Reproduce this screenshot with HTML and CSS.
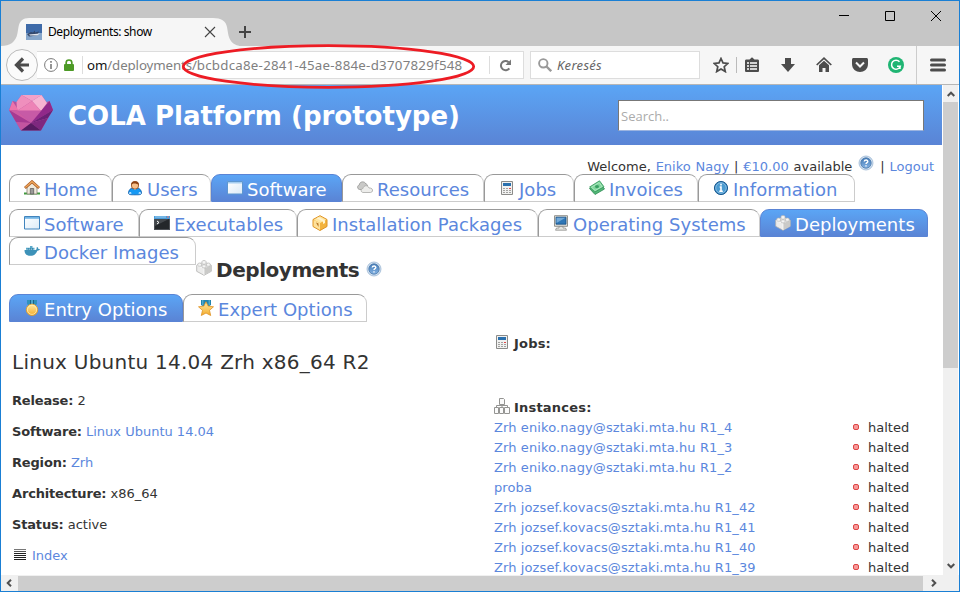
FILE: index.html
```html
<!DOCTYPE html>
<html lang="en">
<head>
<meta charset="utf-8">
<title>Deployments: show</title>
<link rel="stylesheet" href="styles.css">
</head>
<body>
<svg class="defs" width="0" height="0">
  <defs>
    <linearGradient id="gold" x1="0" y1="0" x2="0" y2="1"><stop offset="0" stop-color="#ffe9a0"/><stop offset="1" stop-color="#f3ac2c"/></linearGradient>
    <linearGradient id="pane" x1="0" y1="0" x2="1" y2="1"><stop offset="0" stop-color="#fff"/><stop offset="1" stop-color="#dcebf7"/></linearGradient>
    <linearGradient id="ball" x1="0" y1="0" x2="0" y2="1"><stop offset="0" stop-color="#3f78b5"/><stop offset="1" stop-color="#86b4e4"/></linearGradient>
  </defs>
  <symbol id="i-home" viewBox="0 0 16 16"><path d="M0 12.5h16v2H0z" fill="#3f9a3c"/><path d="M3 7l5-5 5 5v7H3z" fill="#efe9dc" stroke="#8b8275" stroke-width=".8"/><path d="M6.300 8.500h3.400V14H6.300z" fill="#9a9a98" stroke="#555" stroke-width=".7"/><path d="M.9 8L8 1.700 15.100 8" fill="none" stroke="#a85a22" stroke-width="2.800"/><path d="M1.300 7.500L8 1.700l6.700 5.800" fill="none" stroke="#efa75c" stroke-width="1.300"/></symbol>
  <symbol id="i-user" viewBox="0 0 16 16"><path d="M1.500 13c0-3 2-4.600 4-5h5c2 .4 4 2 4 5 0 2-3 1.800-6.500 1.800S1.500 15 1.500 13z" fill="#1699f4" stroke="#0b5aa8" stroke-width=".8"/><path d="M6 8h4l-2 2z" fill="#fff"/><path d="M2 12.500l2-.5.500 1.800H2z" fill="#cfe9ff"/><path d="M14 12.500l-2-.5-.5 1.800H14z" fill="#cfe9ff"/><rect x="4.500" y="1.500" width="7" height="7.500" rx="3" fill="#f7c08a" stroke="#8a4516" stroke-width=".8"/><path d="M4 5.500C3.500-.3 12.500-.3 12 5.500 11 4 9 3.600 7 3.600 6 3.600 5 4 4 5.500z" fill="#8d4213"/></symbol>
  <symbol id="i-window" viewBox="0 0 16 16"><path d="M.5 1.500h15v12.500H.5z" fill="url(#pane)" stroke="#4184bd"/><path d="M1 2h14v1.800H1z" fill="#72b5e5"/></symbol>
  <symbol id="i-window-light" viewBox="0 0 16 16"><path d="M.5 1.500h15v12.500H.5z" fill="url(#pane)" stroke="#5e97cf"/><path d="M1 2h14v1.500H1z" fill="#a4cdf0"/></symbol>
  <symbol id="i-term" viewBox="0 0 16 16"><path d="M0 1h16v14H0z" fill="#4c4f54"/><path d="M0 1h16v3H0z" fill="#4a9bd8"/><path d="M1 2h11" stroke="#9fd0f2"/><path d="M13 2h2" stroke="#e77"/><path d="M1 4h14v10H1z" fill="#24272a"/><path d="M1 4h14L1 11z" fill="#43474b"/><path d="M3 6l2 1.500L3 9" fill="none" stroke="#fff"/></symbol>
  <symbol id="i-cloud" viewBox="0 0 16 16"><path d="M2.500 9.500C0 9 0 5.500 2.300 5 2.500 1 8 1 8.800 4c2 0 2.500 3 .7 5.500z" fill="#c9c9c7" stroke="#969694" stroke-width=".8"/><path d="M6 12.500c-2.500-.2-2.500-3.800 0-4C6.500 5 11 4.800 12 8c4.500-.4 4.500 4.300 1.500 4.500z" fill="#ededeb" stroke="#a8a8a6" stroke-width=".8"/></symbol>
  <symbol id="i-calc" viewBox="0 0 16 16"><path d="M2.500 1.500h11v13h-11z" fill="#f1f1f0" stroke="#8b8b89"/><path d="M4 3h8v3H4z" fill="#2a70ae"/><path d="M4 8.500h6M4 10.500h8M4 12.500h8" stroke="#a2a2a0" stroke-dasharray="2 1"/><path d="M10 8.500h2" stroke="#e04848"/></symbol>
  <symbol id="i-money" viewBox="0 0 16 16"><path d="M.5 8.500L11 3l4.500 6L6 14.500z" fill="#55b879" stroke="#2b8a50" stroke-width=".8"/><path d="M.6 7L10.500.8l4.500 6L5.800 12z" fill="#7fd49b" stroke="#2f9455" stroke-width=".8"/><path d="M2.500 7.300l7.600-4.700L13 6.500 6.200 10.400z" fill="none" stroke="#b5ebc6" stroke-width=".8"/><ellipse cx="8" cy="6.600" rx="2" ry="1.700" fill="#3aa062"/></symbol>
  <symbol id="i-info" viewBox="0 0 16 16"><circle cx="8" cy="8" r="6.600" fill="#2c7bb6" stroke="#1b5c92"/><circle cx="8" cy="8" r="5.300" fill="#4b9bd0" stroke="#a9d3ef" stroke-width=".7"/><path d="M8 3.700v1.800M6.700 7H8v4M6.300 11.300h3.500" stroke="#fff" stroke-width="1.600" fill="none"/></symbol>
  <symbol id="i-box" viewBox="0 0 16 16"><path d="M8 .7l7 3.800v7L8 15.500l-7-4v-7z" fill="#f3b33e" stroke="#dd9326"/><path d="M8 1.300l6.300 3.400L8 8 1.700 4.700z" fill="#ffe7a4"/><path d="M8 8v7l-6.400-3.700V4.900z" fill="#ffe19a"/><path d="M4.500 3.200L11 6.500V9l2-1V5.500L6.500 2.200z" fill="#fff4cf"/><path d="M4 7.500l2.500 1V12z" fill="#b57321"/></symbol>
  <symbol id="i-screen" viewBox="0 0 16 16"><path d="M1.500.7h13v10.600h-13z" fill="#deded9" stroke="#92928d"/><path d="M3 2.200h10v7H3z" fill="#2f77b6" stroke="#184e83" stroke-width=".8"/><path d="M3.500 2.700h9L3.500 8z" fill="#72a9d8"/><path d="M6 11.500h4v1.500h2.500l1 2.200h-11l1-2.200H6z" fill="#e5e5e1" stroke="#8f8f8b" stroke-width=".8"/></symbol>
  <symbol id="i-brick" viewBox="0 0 16 16"><path d="M8 2l7.300 3.300v6L8 15.300.7 11.300v-6z" fill="#ececeb" stroke="#b0b0ae" stroke-width=".8"/><path d="M8 8.600l7-3v5.600L8 15z" fill="#cacac8"/><path d="M.9 5.500L8 8.600V15" fill="none" stroke="#fff" stroke-width=".7"/><g fill="#f5f5f4" stroke="#b3b3b1" stroke-width=".7"><path d="M6 1.500c0-1.300 4-1.300 4 0v2c0 1-4 1-4 0z"/><path d="M1.800 4c0-1.300 3.800-1.300 3.800 0v1.500c0 1-3.800 1-3.800 0zM10.400 4c0-1.300 3.800-1.300 3.800 0v1.500c0 1-3.800 1-3.800 0z"/><path d="M6 5.700c0-1.300 4-1.300 4 0v1.500c0 1-4 1-4 0z"/></g></symbol>
  <symbol id="i-whale" viewBox="0 0 16 16"><path d="M.5 7h10.800c1.200 0 1.600-.9 1.200-2.200l.7-.8c.8.500 1.200 1.200 1.200 1.900l1.600.2c-.4 1.200-1.200 1.600-2.600 1.700C12 11.500 9.600 12.800 6.200 12.800 2.500 12.800.5 10.900.5 7z" fill="#3d92b8"/><path d="M2 4.800h8.500v2H2zM6 3h2.500v1.800H6z" fill="#5aa9ca"/><path d="M4.300 5v2M6.400 5V7M8.500 5v2" stroke="#286e91" stroke-width=".6"/></symbol>
  <symbol id="i-medal" viewBox="0 0 16 16"><path d="M3 0h10v4l-3 2.500H6L3 4z" fill="#2f91bd"/><path d="M6 0h4v6H6z" fill="#1b6387"/><path d="M7.200 0h1.600v5H7.200z" fill="#54b5dc"/><circle cx="8" cy="9.800" r="5.700" fill="url(#gold)" stroke="#e39b22" stroke-width=".8"/><circle cx="8" cy="9.800" r="4.600" fill="none" stroke="#fff3bd" stroke-width=".7"/></symbol>
  <symbol id="i-star" viewBox="0 0 16 16"><path d="M3 0h10v5L8 8 3 5z" fill="#2384ac"/><path d="M4.800 0v5M11.200 0v5" stroke="#63bbdc"/><path d="M8 1.800l2.200 4.300 5.300.7-4 3.500 1.200 5.200L8 13l-4.700 2.500 1.200-5.200-4-3.500 5.300-.7z" fill="url(#gold)" stroke="#df9325" stroke-width=".8"/></symbol>
  <symbol id="i-help" viewBox="0 0 16 16"><circle cx="8" cy="8" r="7" fill="#d2e1f1" stroke="#9bb6d3" stroke-width=".8"/><circle cx="8" cy="8" r="5.200" fill="url(#ball)" stroke="#4b78aa" stroke-width=".8"/><path d="M6.200 6.500c.2-2 3.800-1.900 3.600.1C9.700 7.700 8 7.700 8 9M8 10.300v1.300" fill="none" stroke="#fff" stroke-width="1.400"/></symbol>
  <symbol id="i-tree" viewBox="0 0 16 16"><g fill="#fafafa" stroke="#949492"><path d="M5.500.5h4l1 1v5h-5z"/><path d="M2.500 10V7.500h11V10M8 6.500V10" fill="none"/><path d="M.5 9.500h4v6h-4zM5.500 9.500h4v6h-4zM10.500 9.500h5v6h-5z"/></g></symbol>
  <symbol id="i-list" viewBox="0 0 16 16"><path d="M2 2.500h12" stroke="#777"/><path d="M2 4.500h12" stroke="#555"/><path d="M2 6.500h12M2 8.500h12M2 10.500h12M2 12.500h12" stroke="#222"/></symbol>
</svg>

<div class="window">
  <div class="titlebar">
    <div class="browser-tab">
      <svg class="tab-shape" width="242" height="28" viewBox="0 0 242 28"><path d="M0 28c9 0 15-4 16.500-13l1-6C18.500 3 22 0 28 0h184c8 0 13 3 14 9l1 6c1.500 9 6 13 15 13z" fill="#f6f6f6"/></svg>
      <svg class="favicon" width="16" height="16" viewBox="0 0 16 16"><path d="M0 0h16v16H0z" fill="#3e6aa8"/><path d="M0 9h16v7H0z" fill="#86a6cb"/><path d="M1 10l4-2 2 .5 2-2v2l4-1-2 4-8 1z" fill="#34486c"/><path d="M3 10.500l11-1-3 2H4z" fill="#e4e7ee"/></svg>
      <span class="tab-title">Deployments: show</span>
      <svg class="tab-close" width="12" height="12" viewBox="0 0 12 12"><path d="M1 1l10 10M11 1L1 11" stroke="#444" stroke-width="1.100"/></svg>
    </div>
    <svg class="new-tab" width="12" height="12" viewBox="0 0 12 12"><path d="M6 0v12M0 6h12" stroke="#444" stroke-width="2"/></svg>
    <div class="win-buttons">
      <svg width="10" height="10" viewBox="0 0 10 10"><path d="M0 4.500h10" stroke="#000"/></svg>
      <svg width="10" height="10" viewBox="0 0 10 10"><path d="M.5.5h9v9h-9z" fill="none" stroke="#000"/></svg>
      <svg width="10" height="10" viewBox="0 0 10 10"><path d="M0 0l10 10M10 0L0 10" stroke="#000"/></svg>
    </div>
  </div>

  <div class="toolbar">
    <div class="back"><svg width="16" height="16" viewBox="0 0 16 16"><path d="M9 1.500L2.500 8 9 14.500M3 8h12" fill="none" stroke="#4c4c4c" stroke-width="3.200"/></svg></div>
    <div class="urlbar">
      <svg class="url-info" width="14" height="14" viewBox="0 0 14 14"><circle cx="7" cy="7" r="6.400" fill="none" stroke="#7a7a7a"/><path d="M7 3v1.700M7 6v5" stroke="#7a7a7a" stroke-width="1.600"/></svg>
      <svg class="lock" width="10" height="12" viewBox="0 0 10 12"><path d="M2.200 6V3.600c0-3.500 5.600-3.500 5.600 0V6" fill="none" stroke="#4d9a26" stroke-width="1.700"/><rect y="5" width="10" height="7" rx="1" fill="#4d9a26"/></svg>
      <span class="url"><b>om</b>/deployments/<span class="uuid">bcbdca8e-2841-45ae-884e-d3707829f548</span></span>
      <svg class="reload" width="13" height="13" viewBox="0 0 13 13"><path d="M10.300 9.300A4.600 4.600 0 1 1 9.600 3.200" fill="none" stroke="#777" stroke-width="2"/><path d="M12 .5V6H6.500z" fill="#777"/></svg>
    </div>
    <div class="searchbar">
      <svg width="14" height="14" viewBox="0 0 14 14"><circle cx="5.300" cy="5.300" r="4.200" fill="none" stroke="#999" stroke-width="1.900"/><path d="M8.500 8.500l4.700 4.700" stroke="#999" stroke-width="2.400"/></svg>
      <span>Keresés</span>
    </div>
    <div class="tools">
      <svg width="16" height="16" viewBox="0 0 16 16"><path d="M8 1.500l2 4.400 4.900.5-3.700 3.300 1.100 4.900L8 12.100l-4.300 2.500 1.100-4.900L1.100 6.400 6 5.900z" fill="none" stroke="#4c4c4c" stroke-width="1.700"/></svg>
      <i class="sep"></i>
      <svg width="16" height="16" viewBox="0 0 16 16"><path d="M1 4c0-1 .5-1.500 1.500-1.500h3L8 .2l2.500 2.300h3c1 0 1.500.5 1.500 1.500v9.500c0 1-.5 1.500-1.500 1.500h-11C1.500 15 1 14.500 1 13.500z" fill="#4c4c4c"/><path d="M3 6h2M6 6h7M3 9h2M6 9h7M3 12h2M6 12h7" stroke="#fff" stroke-width="1.700"/></svg>
      <svg width="16" height="16" viewBox="0 0 16 16"><path d="M5 1h6v6h4l-7 8-7-8h4z" fill="#4c4c4c"/></svg>
      <svg width="16" height="16" viewBox="0 0 16 16"><path d="M.7 8L8 1.200 15.300 8" fill="none" stroke="#4c4c4c" stroke-width="1.700"/><path d="M3 8.300l5-4.600 5 4.600V15H9.500v-4h-3v4H3z" fill="#4c4c4c"/></svg>
      <svg width="16" height="16" viewBox="0 0 16 16"><path d="M1.500 1h13c.8 0 1.500.6 1.500 1.500V7c0 10.500-16 10.500-16 0V2.500C0 1.600.7 1 1.500 1z" fill="#4c4c4c"/><path d="M4 5.500l4 4 4-4" fill="none" stroke="#f6f6f6" stroke-width="2"/></svg>
      <svg width="16" height="16" viewBox="0 0 16 16"><circle cx="8" cy="8" r="8" fill="#1fb573"/><path d="M11.500 4.800A4.500 4.500 0 1 0 12.300 9.200H9M12 9v3" fill="none" stroke="#fff" stroke-width="1.500"/></svg>
    </div>
    <div class="menu"><svg width="16" height="14" viewBox="0 0 16 14"><path d="M1.500 2h13M1.500 7h13M1.500 12h13" stroke="#4c4c4c" stroke-width="3" stroke-linecap="round"/></svg></div>
  </div>

  <div class="content">
    <div class="page">
      <header class="banner">
        <svg class="logo" width="44" height="36" viewBox="0 0 44 36"><path d="M12.500 0h20l5 7 3-1L44 15 32 35.500H12L0 15l3.500-9 4 1z" fill="#b4529f"/><path d="M12.500 0h20L23 6z" fill="#f3a1c8"/><path d="M12.500 0L23 6 8 16l-.5-9z" fill="#ef8fbd"/><path d="M32.500 0L38 8l-6 8-9-10z" fill="#f6b4d2"/><path d="M23 6l9 10H8z" fill="#ed83b6"/><path d="M3.500 6L10 16H0z" fill="#ed73ab"/><path d="M0 15h8l14 13z" fill="#ce5ba3"/><path d="M8 15.500h26L22 28z" fill="#c75aa6"/><path d="M40.500 6L44 15 22 28z" fill="#91298a"/><path d="M44 15L22 28l17-5z" fill="#6c2075"/><path d="M0 15l22 13-15-1z" fill="#a73a91"/><path d="M7 27l15 1-10 7.500z" fill="#c355a0"/><path d="M22 28l17-5-7 12.500z" fill="#7e287f"/><path d="M12 35.500L22 28l10 7.500z" fill="#571b62"/></svg>
        <h1>COLA Platform (prototype)</h1>
        <div class="site-search">Search..</div>
      </header>

      <div class="account"><span>Welcome, <a>Eniko Nagy</a> | <a>€10.00</a> available</span><svg width="16" height="16"><use href="#i-help"/></svg><span>| <a>Logout</a></span></div>

      <nav class="tabs main">
        <a class="tab w103"><svg><use href="#i-home"/></svg>Home</a>
        <a class="tab w99"><svg><use href="#i-user"/></svg>Users</a>
        <a class="tab on w131"><svg><use href="#i-window-light"/></svg>Software</a>
        <a class="tab w142"><svg><use href="#i-cloud"/></svg>Resources</a>
        <a class="tab w90"><svg><use href="#i-calc"/></svg>Jobs</a>
        <a class="tab w124"><svg><use href="#i-money"/></svg>Invoices</a>
        <a class="tab w157"><svg><use href="#i-info"/></svg>Information</a>
      </nav>
      <nav class="tabs sub">
        <a class="tab w130"><svg><use href="#i-window"/></svg>Software</a>
        <a class="tab w158"><svg><use href="#i-term"/></svg>Executables</a>
        <a class="tab w241"><svg><use href="#i-box"/></svg>Installation Packages</a>
        <a class="tab w222"><svg><use href="#i-screen"/></svg>Operating Systems</a>
        <a class="tab on w168"><svg><use href="#i-brick"/></svg>Deployments</a>
      </nav>
      <div class="tabs third">
        <a class="tab w187"><svg><use href="#i-whale"/></svg>Docker Images</a>
        <h2><svg><use href="#i-brick"/></svg><span>Deployments</span><svg><use href="#i-help"/></svg></h2>
      </div>
      <nav class="tabs options">
        <a class="tab on w174"><svg><use href="#i-medal"/></svg>Entry Options</a>
        <a class="tab w184"><svg><use href="#i-star"/></svg>Expert Options</a>
      </nav>

      <main class="columns">
        <section class="details">
          <h3>Linux Ubuntu 14.04 Zrh x86_64 R2</h3>
          <p><b>Release:</b> 2</p>
          <p><b>Software:</b> <a>Linux Ubuntu 14.04</a></p>
          <p><b>Region:</b> <a>Zrh</a></p>
          <p><b>Architecture:</b> x86_64</p>
          <p><b>Status:</b> active</p>
          <p class="index"><svg width="16" height="16"><use href="#i-list"/></svg><a>Index</a></p>
        </section>
        <section class="related">
          <h4 class="jobs"><svg><use href="#i-calc"/></svg>Jobs:</h4>
          <h4 class="inst"><svg><use href="#i-tree"/></svg>Instances:</h4>
          <ul>
            <li><a>Zrh eniko.nagy@sztaki.mta.hu R1_4</a><i></i>halted</li>
            <li><a>Zrh eniko.nagy@sztaki.mta.hu R1_3</a><i></i>halted</li>
            <li><a>Zrh eniko.nagy@sztaki.mta.hu R1_2</a><i></i>halted</li>
            <li><a>proba</a><i></i>halted</li>
            <li><a>Zrh jozsef.kovacs@sztaki.mta.hu R1_42</a><i></i>halted</li>
            <li><a>Zrh jozsef.kovacs@sztaki.mta.hu R1_41</a><i></i>halted</li>
            <li><a>Zrh jozsef.kovacs@sztaki.mta.hu R1_40</a><i></i>halted</li>
            <li><a>Zrh jozsef.kovacs@sztaki.mta.hu R1_39</a><i></i>halted</li>
          </ul>
        </section>
      </main>
    </div>
    <div class="vbar">
      <svg width="8" height="6" viewBox="0 0 8 6"><path d="M.7 5L4 1.700 7.300 5" fill="none" stroke="#505050" stroke-width="2"/></svg>
      <div class="vthumb"></div>
      <svg width="8" height="6" viewBox="0 0 8 6"><path d="M.7 1L4 4.300 7.300 1" fill="none" stroke="#505050" stroke-width="2"/></svg>
    </div>
  </div>
  <div class="hbar">
    <svg width="6" height="8" viewBox="0 0 6 8"><path d="M5 .7L1.700 4 5 7.300" fill="none" stroke="#505050" stroke-width="2"/></svg>
    <div class="hthumb"></div>
    <svg width="6" height="8" viewBox="0 0 6 8"><path d="M1 .7L4.300 4 1 7.300" fill="none" stroke="#505050" stroke-width="2"/></svg>
  </div>
  <svg class="marker" width="296" height="48" viewBox="0 0 296 48"><ellipse cx="147.500" cy="24.500" rx="145.200" ry="20.800" fill="none" stroke="#ed1c24" stroke-width="2.800"/></svg>
</div>
</body>
</html>
```
FILE: styles.css
```css
* { box-sizing: border-box; }
html, body { margin: 0; width: 960px; height: 592px; overflow: hidden; }
body { font-family: "DejaVu Sans", sans-serif; font-size: 13px; color: #333; background: #fff; }
svg { display: block; flex: none; }
.defs { position: absolute; }
h1, h2, h3, h4, p, ul { margin: 0; padding: 0; }
a { color: #5b87dd; text-decoration: none; }
.window { position: relative; width: 960px; height: 592px; border: 1px solid #1a7fd4; display: flex; flex-direction: column; }

/* Window frame and browser toolbar */
.titlebar { height: 45px; background: #c6c6c6; display: flex; align-items: flex-end; flex: none; font-family: "Noto Sans", sans-serif; }
.browser-tab { position: relative; width: 238px; height: 28px; display: flex; align-items: center; padding-left: 25px; overflow: hidden; }
.tab-shape { position: absolute; left: 0; top: 0; }
.favicon, .tab-title, .tab-close { position: relative; }
.tab-title { margin: -1px 0 0 6px; width: 156px; font-size: 12px; letter-spacing: -.4px; color: #000; white-space: nowrap; }
.new-tab { margin-bottom: 8px; }
.win-buttons { margin-left: auto; align-self: flex-start; display: flex; gap: 36px; padding: 10px 18px 0 0; }
.toolbar { height: 39px; flex: none; background: #f6f6f6; border-bottom: 1px solid #b6b6b6; display: flex; align-items: center; font-family: "Noto Sans", sans-serif; }
.back { position: relative; z-index: 1; width: 32px; height: 32px; margin-left: 5px; border: 1px solid #bbb; border-radius: 50%; background: #fbfbfb; display: flex; align-items: center; justify-content: center; flex: none; }
.urlbar { width: 487px; height: 28px; margin-left: -1px; background: #fff; border: 1px solid #ddd; border-left: 0; display: flex; align-items: center; padding-left: 7px; flex: none; }
.lock { margin-left: 6px; }
.url { margin-left: 8px; border-left: 1px solid #ddd; border-right: 1px solid #ddd; width: 408px; height: 18px; line-height: 19px; padding-left: 4px; font-size: 13.300px; letter-spacing: -.12px; color: #808080; white-space: nowrap; }
.uuid { letter-spacing: .25px; }
.url b { color: #111; font-weight: 400; }
.reload { margin-left: 9px; }
.searchbar { width: 170px; height: 28px; margin-left: 6px; background: #fff; border: 1px solid #ddd; display: flex; align-items: center; gap: 5px; padding-left: 7px; font-size: 13px; letter-spacing: .3px; font-style: italic; color: #666; flex: none; }
.tools { display: flex; align-items: center; gap: 20px; margin-left: 13px; }
.sep { width: 1px; height: 16px; background: #bbb; margin: 0 -13px 0 -13px; }
.menu { margin-left: 12px; border-left: 1px solid #ccc; height: 38px; padding-left: 13px; display: flex; align-items: center; }
.marker { position: absolute; left: 180px; top: 41px; }

/* Page */
.content { flex: 1; min-height: 0; display: flex; }
.page { width: 942px; overflow: hidden; }
.banner { width: 941px; height: 60px; background: linear-gradient(#5ba5f5, #5a84d5); display: flex; align-items: center; padding-left: 8px; }
.logo { margin-top: -5px; }
h1 { margin: 2px 0 0 15px; width: 550px; font-size: 26px; line-height: 30px; color: #fff; white-space: nowrap; }
.site-search { width: 306px; height: 31px; border: 1px solid #777; border-color: #777 #777 #9cb4e0 #777; background: #fff; font: 13px/31px "Open Sans", sans-serif; color: #ababab; padding-left: 2px; }
.account { height: 29px; padding: 12px 9px 0 0; display: flex; justify-content: flex-end; gap: 6px; line-height: 20px; white-space: nowrap; word-spacing: .7px; }
.account svg { margin-top: -2px; }
.tabs { display: flex; height: 28px; padding-left: 8px; }
.sub { margin-top: 7px; }
.tab { height: 28px; border: 1px solid; border-color: #999 #ccc #ccc #999; border-radius: 9px 9px 0 0; display: flex; padding-left: 14px; gap: 4px; font-size: 18px; line-height: 29px; letter-spacing: .03px; white-space: nowrap; flex: none; }
.tab svg, h2 svg, h4 svg { width: 16px; height: 16px; }
.tab svg { margin-top: 5px; }
.on { color: #fff; background: linear-gradient(#5ba5f5, #5a84d5); border-color: #5a84d5; }
.main .on { padding-left: 15px; }
.w90 { width: 90px; } .w99 { width: 99px; } .w103 { width: 103px; } .w124 { width: 124px; }
.w130 { width: 130px; } .w131 { width: 131px; } .w142 { width: 142px; } .w157 { width: 157px; }
.w158 { width: 158px; } .w168 { width: 168px; } .w174 { width: 174px; } .w184 { width: 184px; }
.w187 { width: 187px; } .w222 { width: 222px; } .w241 { width: 241px; }
h2 { display: flex; gap: 4px; padding-top: 22px; font-size: 20px; line-height: 22px; letter-spacing: -.45px; white-space: nowrap; height: 50px; }
h2 svg:first-child { margin-top: 1px; }
h2 span { width: 146px; }
h2 svg:last-child { margin-top: 2px; }
.options { margin-top: 29px; }
.columns { display: flex; }
.details { width: 493px; padding: 28px 0 0 11px; }
h3 { font-size: 20px; font-weight: 400; line-height: 24px; letter-spacing: .25px; margin-bottom: 19px; white-space: nowrap; }
p { line-height: 15px; margin-top: 16px; white-space: nowrap; }
p b { letter-spacing: -.17px; }
.index { display: flex; gap: 4px; }
.index svg { margin-top: -1px; }
.related { padding-top: 12px; }
h4 { display: flex; gap: 4px; line-height: 20px; font-size: 13px; letter-spacing: .2px; height: 20px; }
.inst { margin-top: 44px; }
ul { list-style: none; }
li { display: flex; align-items: center; height: 20px; line-height: 20px; white-space: nowrap; }
li a { width: 359px; letter-spacing: .11px; }
li i { width: 6px; height: 6px; margin: -3px 9px 0 0; border: 1px solid #d44; border-radius: 2px; background: #f79a9a; }

/* Scrollbars */
.vbar { width: 16px; background: #f0f0f0; display: flex; flex-direction: column; align-items: center; padding: 6px 0; border-right: 1px solid #fff; }
.vthumb { width: 15px; height: 266px; margin: 5px 0 auto; background: #cdcdcd; }
.hbar { height: 16px; flex: none; background: #f0f0f0; display: flex; align-items: center; padding-left: 5px; }
.hthumb { width: 905px; height: 15px; margin: 0 8px 0 6px; background: #cdcdcd; }
```
